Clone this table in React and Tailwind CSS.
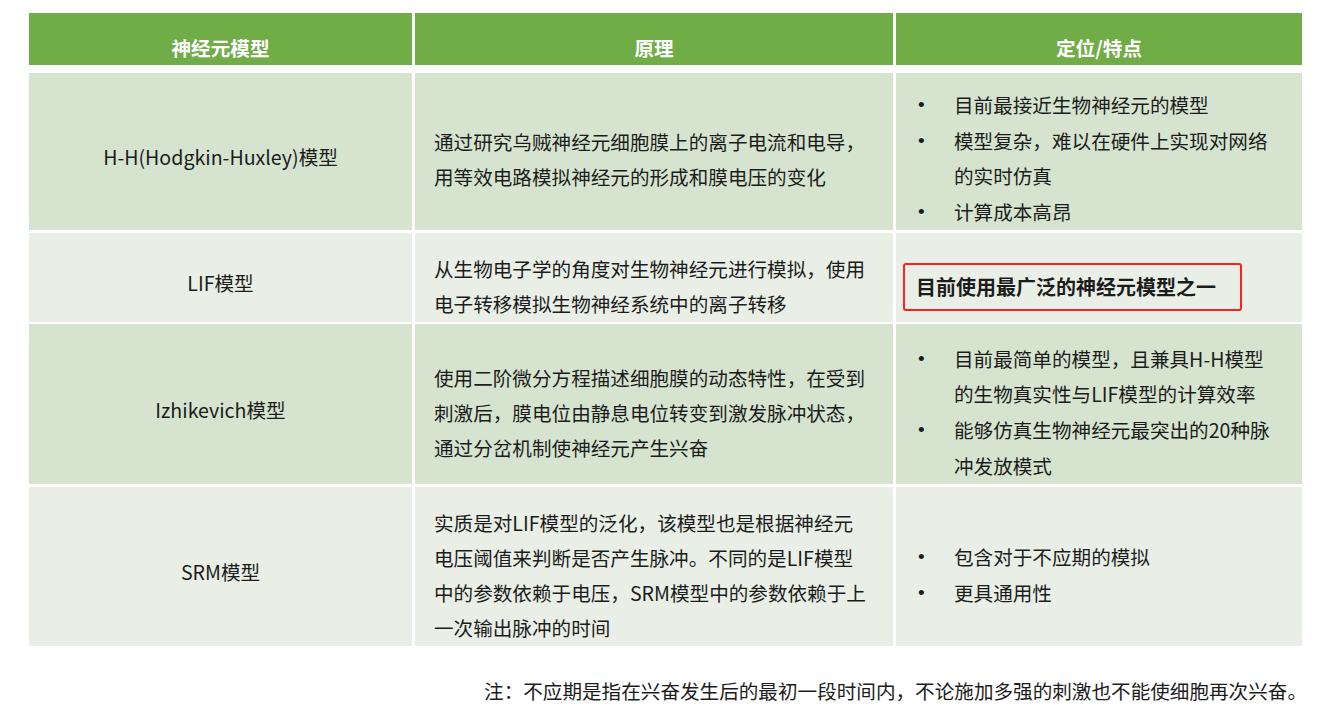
const font = { fontFamily: '"Noto Sans CJK SC", "Noto Sans", sans-serif' };

const Bullet = ({ children }) => (
  <div className="flex">
    <span className="w-[36px] shrink-0 font-['Liberation_Sans'] text-[19px]">•</span>
    <span className="whitespace-nowrap">{children}</span>
  </div>
);

const rows = [
  {
    h: "h-[156px] mb-[4px]",
    bg: "bg-[#d6e4cf]",
    pad: "pl-[22px] pt-[14px]",
    name: "H-H(Hodgkin-Huxley)模型",
    principle: ["通过研究乌贼神经元细胞膜上的离子电流和电导，", "用等效电路模拟神经元的形成和膜电压的变化"],
    features: (
      <div>
        <Bullet>目前最接近生物神经元的模型</Bullet>
        <Bullet>
          模型复杂，难以在硬件上实现对网络
          <br />
          的实时仿真
        </Bullet>
        <Bullet>计算成本高昂</Bullet>
      </div>
    ),
  },
  {
    h: "h-[89px] mb-[2px]",
    bg: "bg-[#e9efe6]",
    pad: "pl-[7px] pt-[18px]",
    name: "LIF模型",
    principle: ["从生物电子学的角度对生物神经元进行模拟，使用", "电子转移模拟生物神经系统中的离子转移"],
    features: (
      <div className="flex h-[48px] w-[339px] items-center rounded-[3px] border-2 border-[#ff1f1f] pl-[11px] font-bold text-[20px] leading-none">
        目前使用最广泛的神经元模型之一
      </div>
    ),
  },
  {
    h: "h-[160px] mb-[3px]",
    bg: "bg-[#d6e4cf]",
    pad: "pl-[22px] pt-[16px]",
    name: "Izhikevich模型",
    principle: [
      "使用二阶微分方程描述细胞膜的动态特性，在受到",
      "刺激后，膜电位由静息电位转变到激发脉冲状态，",
      "通过分岔机制使神经元产生兴奋",
    ],
    features: (
      <div>
        <Bullet>
          目前最简单的模型，且兼具H-H模型
          <br />
          的生物真实性与LIF模型的计算效率
        </Bullet>
        <Bullet>
          能够仿真生物神经元最突出的20种脉
          <br />
          冲发放模式
        </Bullet>
      </div>
    ),
  },
  {
    h: "h-[159px]",
    bg: "bg-[#e9efe6]",
    pad: "pl-[22px] pt-[16px]",
    name: "SRM模型",
    principle: [
      "实质是对LIF模型的泛化，该模型也是根据神经元",
      "电压阈值来判断是否产生脉冲。不同的是LIF模型",
      "中的参数依赖于电压，SRM模型中的参数依赖于上",
      "一次输出脉冲的时间",
    ],
    features: (
      <div>
        <Bullet>包含对于不应期的模拟</Bullet>
        <Bullet>更具通用性</Bullet>
      </div>
    ),
  },
];

export default function App() {
  return (
    <div
      className="w-[1323px] h-[714px] bg-white pt-[13px] pl-[29px] text-[19.6px] leading-[35px] text-[#1c1c1c]"
      style={font}
    >
      {/* Header */}
      <div className="grid h-[52px] w-[1273px] grid-cols-[383px_478px_406px] gap-x-[3px] mb-[8px] font-bold text-white">
        <div className="flex items-center justify-center bg-[#70ad47] pt-[16px]">神经元模型</div>
        <div className="flex items-center justify-center bg-[#70ad47] pt-[16px]">原理</div>
        <div className="flex items-center justify-center bg-[#70ad47] pt-[16px]">定位/特点</div>
      </div>

      {/* Body rows */}
      {rows.map((r) => (
        <div
          key={r.name}
          className={`grid w-[1273px] grid-cols-[383px_478px_406px] gap-x-[3px] ${r.h}`}
        >
          <div className={`flex items-center justify-center pt-[10px] ${r.bg}`}>{r.name}</div>
          <div className={`flex items-center pt-[16px] pl-[19px] ${r.bg}`}>
            <div className="whitespace-nowrap">
              {r.principle.map((line) => (
                <div key={line}>{line}</div>
              ))}
            </div>
          </div>
          <div className={`flex items-center leading-[35.7px] ${r.pad} ${r.bg}`}>{r.features}</div>
        </div>
      ))}

      {/* Note */}
      <div className="mt-[27px] w-[1278px] text-right whitespace-nowrap">
        注：不应期是指在兴奋发生后的最初一段时间内，不论施加多强的刺激也不能使细胞再次兴奋。
      </div>
    </div>
  );
}
